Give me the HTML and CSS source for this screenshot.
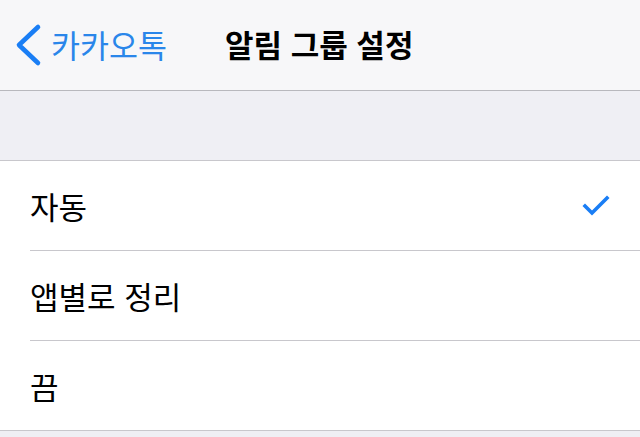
FILE: index.html
```html
<!DOCTYPE html>
<html lang="ko">
<head>
<meta charset="utf-8">
<link rel="stylesheet" href="styles.css">
</head>
<body>
<header class="nav">
  <a class="back">
    <svg class="chev" width="28" height="44" viewBox="0 0 28 44"><path d="M24 4 L5 22 L24 40" fill="none" stroke="#1a7ef5" stroke-width="4.6" stroke-linecap="round" stroke-linejoin="round"/></svg>
    <span class="back-label">카카오톡</span>
  </a>
  <h1 class="title">알림 그룹 설정</h1>
</header>
<div class="gap"></div>
<ul class="list">
  <li class="row"><span class="label">자동</span>
    <svg class="check" width="28" height="24" viewBox="0 0 28 24"><path d="M3 12 L10 19 L25 4" fill="none" stroke="#1a7ef5" stroke-width="3.6" stroke-linecap="square" stroke-linejoin="miter"/></svg>
  </li>
  <li class="row"><span class="label">앱별로 정리</span></li>
  <li class="row last"><span class="label">끔</span></li>
</ul>
</body>
</html>
```
FILE: styles.css
```css
html, body {
  margin: 0;
  padding: 0;
}
body {
  width: 640px;
  height: 437px;
  overflow: hidden;
  background: #efeff4;
  font-family: "Noto Sans CJK KR", "Noto Sans", sans-serif;
  color: #000;
}
.nav {
  height: 90px;
  background: #f7f7f9;
  border-bottom: 1px solid #b8b8bd;
  display: flex;
  align-items: center;
  position: relative;
}
.back {
  display: flex;
  align-items: center;
  padding-left: 14px;
  color: #2a86ea;
}
.chev {
  display: block;
  margin-right: 9px;
}
.back-label {
  font-size: 31.5px;
  line-height: 1;
  margin-top: -1px;
}
.title {
  margin: -3px 0 0 58px;
  font-size: 31px;
  font-weight: 700;
  line-height: 1;
}
.gap {
  height: 69px;
}
.list {
  list-style: none;
  margin: 0;
  padding: 0 0 0 30px;
  background: #fff;
  border-top: 1px solid #c8c7cc;
  border-bottom: 1px solid #c8c7cc;
}
.row {
  height: 89px;
  border-bottom: 1px solid #c8c7cc;
  display: flex;
  align-items: center;
  justify-content: space-between;
  padding-right: 30px;
}
.row.last {
  border-bottom: none;
}
.label {
  font-size: 31px;
  line-height: 1;
  margin-top: 0;
}
.check {
  display: block;
}
```
